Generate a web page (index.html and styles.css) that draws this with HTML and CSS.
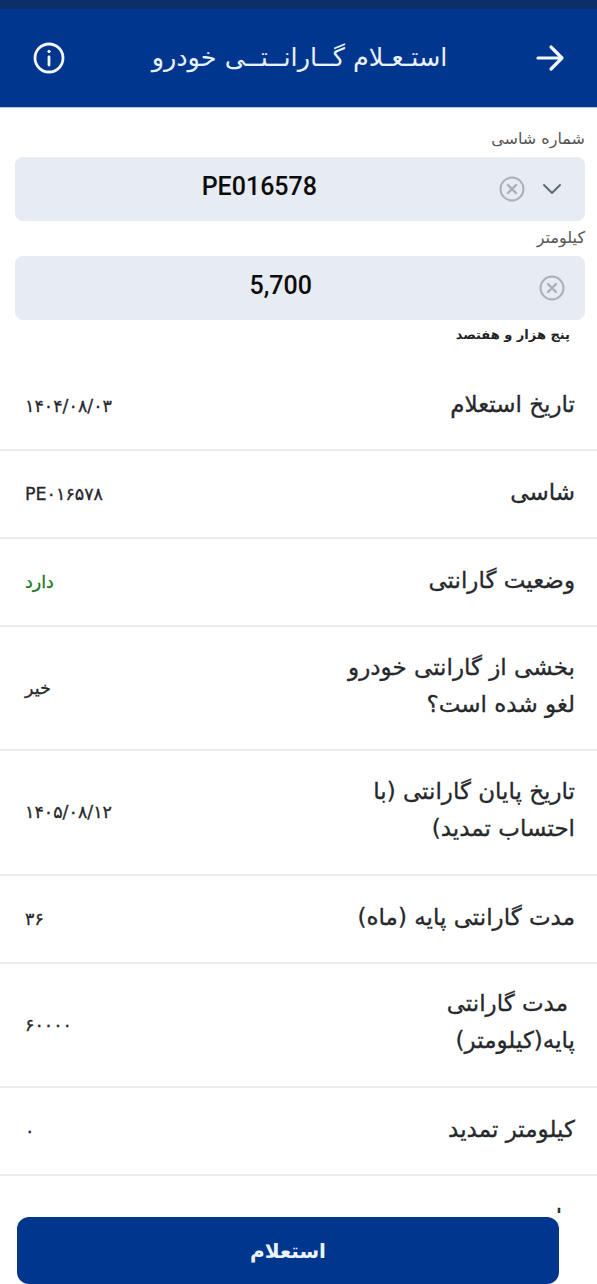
FILE: index.html
```html
<!DOCTYPE html>
<html lang="fa" dir="rtl">
<head>
<meta charset="utf-8">
<title>استعلام گارانتی خودرو</title>
<link rel="stylesheet" href="styles.css">
</head>
<body>
<div class="screen">
  <div class="statusbar"></div>
  <header class="appbar">
    <svg class="icon-back" viewBox="0 0 32 32" width="32" height="32" fill="none" stroke="#f2f7fd" stroke-width="3.2" stroke-linecap="round" stroke-linejoin="round"><path d="M4 16H28M17 5L28 16L17 27"/></svg>
    <h1 class="title">استـعـلام گــارانــتــی خودرو</h1>
    <svg class="icon-info" viewBox="0 0 32 32" width="32" height="32" fill="none" stroke="#f2f7fd" stroke-width="2.8" stroke-linecap="round"><circle cx="16" cy="16" r="14"/><path d="M16 15V23"/><circle cx="16" cy="9.5" r="1.2" fill="#f2f7fd" stroke-width="1"/></svg>
  </header>
  <main class="content">
    <form class="form">
      <label class="field-label">شماره شاسی</label>
      <div class="field">
        <svg class="chev" viewBox="0 0 20 12" width="20" height="12" fill="none" stroke="#5f6b7a" stroke-width="2" stroke-linecap="round" stroke-linejoin="round"><path d="M2 2L10 10L18 2"/></svg>
        <svg class="clear clear-a" viewBox="0 0 26 26" width="26" height="26" fill="none" stroke="#a9b0bb" stroke-width="2"><circle cx="13" cy="13" r="11.5"/><path d="M9 9L17 17M17 9L9 17" stroke-width="2.4" stroke-linecap="round"/></svg>
        <span class="field-value value-a">PE016578</span>
      </div>
      <label class="field-label second">کیلومتر</label>
      <div class="field">
        <svg class="clear clear-b" viewBox="0 0 26 26" width="26" height="26" fill="none" stroke="#a9b0bb" stroke-width="2"><circle cx="13" cy="13" r="11.5"/><path d="M9 9L17 17M17 9L9 17" stroke-width="2.4" stroke-linecap="round"/></svg>
        <span class="field-value value-b">5,700</span>
      </div>
      <p class="hint">پنج هزار و هفتصد</p>
    </form>
    <section class="rows">
      <div class="row"><span class="key">تاریخ استعلام</span><span class="val">۱۴۰۴/۰۸/۰۳</span></div>
      <div class="row"><span class="key">شاسی</span><span class="val">PE۰۱۶۵۷۸</span></div>
      <div class="row"><span class="key">وضعیت گارانتی</span><span class="val ok">دارد</span></div>
      <div class="row tall"><span class="key">بخشی از گارانتی خودرو<br>لغو شده است؟</span><span class="val">خیر</span></div>
      <div class="row tall"><span class="key">تاریخ پایان گارانتی (با<br>احتساب تمدید)</span><span class="val">۱۴۰۵/۰۸/۱۲</span></div>
      <div class="row"><span class="key">مدت گارانتی پایه (ماه)</span><span class="val">۳۶</span></div>
      <div class="row tall"><span class="key"><span class="indent">مدت گارانتی</span><br>پایه(کیلومتر)</span><span class="val">۶۰۰۰۰</span></div>
      <div class="row"><span class="key">کیلومتر تمدید</span><span class="val">۰</span></div>
      <div class="row"><span class="key">ماه تمدید</span><span class="val">۰</span></div>
    </section>
  </main>
  <footer class="actions"><button class="submit" type="button">استعلام</button></footer>
</div>
</body>
</html>
```
FILE: styles.css
```css
* { box-sizing: border-box; }
html, body { margin: 0; padding: 0; }
body { background: #fff; font-family: "DejaVu Sans", "Noto Sans", sans-serif; color: #1c2024; }
.screen { position: relative; width: 597px; height: 1284px; overflow: hidden; background: #fff; }
.statusbar { height: 9px; background: #0b3069; }
.appbar { height: 99px; background: #01368f; border-bottom: 1px solid #a9c8ee; display: flex; align-items: center; justify-content: space-between; padding: 0 31px 0 33px; }
.title { margin: 0; flex: 1; text-align: center; font-size: 25.5px; font-weight: 400; color: #e9f1fb; line-height: 1; }
.form { padding: 17px 12px 0 15px; }
.field-label { display: block; font-size: 16px; line-height: 27px; height: 32px; color: #555; }
.field-label.second { height: 35.5px; line-height: 34px; }
.field { display: flex; align-items: center; height: 63.5px; background: #e7ebf2; border-radius: 8px; padding: 0 23px 0 0; gap: 14px; }
.clear-a { margin-right: 3px; }
.clear-b { margin-right: -3px; }
.field-value { font-family: Roboto, "Liberation Sans", sans-serif; font-size: 25px; font-weight: 500; color: #0c0c0c; direction: ltr; padding-bottom: 5px; }
.value-a { margin-right: 168px; }
.value-b { margin-right: 213px; }
.hint { margin: 6px 15px 0 0; font-size: 13px; line-height: 17px; font-weight: 700; color: #222; }
.rows { margin-top: 20.5px; }
.row { display: flex; align-items: center; justify-content: space-between; height: 88px; padding: 0 22px 0 25px; border-bottom: 2px solid #ececee; }
.row.tall { height: 124.3px; }
.key { font-size: 23px; line-height: 37px; padding-bottom: 3px; color: #26282c; max-width: 320px; -webkit-text-stroke: 0.3px #26282c; }
.row.tall .key { padding-bottom: 5px; }
.indent { display: inline-block; padding-right: 7px; }
.val { font-size: 17.5px; color: #26282c; -webkit-text-stroke: 0.3px #26282c; }
.val.ok { color: #1c7a24; -webkit-text-stroke: 0.3px #1c7a24; }
.actions { position: absolute; left: 0; right: 0; bottom: 0; height: 71px; background: #fff; padding: 4px 38px 0 17px; }
.submit { display: block; width: 100%; height: 67px; border: 0; border-radius: 12px; background: #01368f; color: #e9f5fb; font: 700 20px "DejaVu Sans", sans-serif; }
```
